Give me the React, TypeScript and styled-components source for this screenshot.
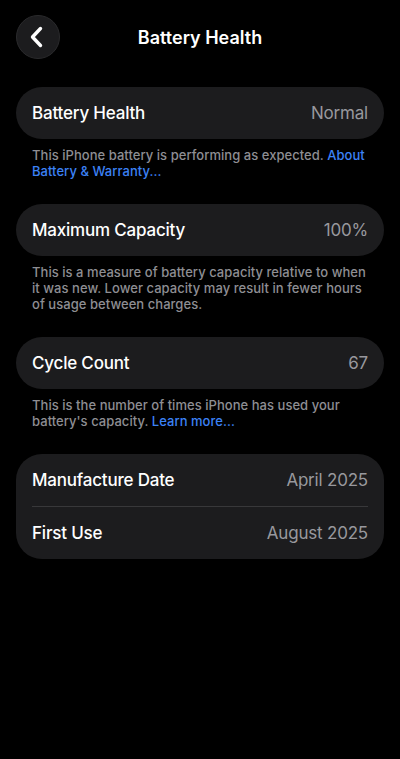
import styled, { createGlobalStyle } from "styled-components";

const GlobalStyle = createGlobalStyle`
  html, body {
    margin: 0;
    padding: 0;
    background: #000;
  }
  body {
    font-family: Inter, "Noto Sans", sans-serif;
    -webkit-font-smoothing: antialiased;
  }
`;

type Row = { label: string; value: string };

export default function App() {
  return (
    <Screen>
      <GlobalStyle />
      <Header>
        <BackButton aria-label="Back">
          <svg width="18" height="22" viewBox="0 0 18 22" fill="none">
            <path
              d="M12.5 2.5 L4.5 11 L12.5 19.5"
              stroke="#fff"
              strokeWidth="3.4"
              strokeLinecap="round"
              strokeLinejoin="round"
            />
          </svg>
        </BackButton>
        <Title>Battery Health</Title>
      </Header>
      <Content>
        {sections.map((s, i) => (
          <Section key={i}>
            <Card>
              {s.rows.map((r, j) => (
                <CardRow key={j} $divider={j > 0}>
                  <Label>{r.label}</Label>
                  <Value>{r.value}</Value>
                </CardRow>
              ))}
            </Card>
            {s.note && <Note>{s.note}</Note>}
          </Section>
        ))}
      </Content>
    </Screen>
  );
}

const Screen = styled.div`
  width: 400px;
  min-height: 759px;
  background: #000;
  color: #fff;
`;

const Header = styled.div`
  position: relative;
  height: 74px;
  display: flex;
  align-items: center;
  justify-content: center;
`;

const BackButton = styled.button`
  position: absolute;
  left: 16px;
  top: 15px;
  width: 44px;
  height: 44px;
  border-radius: 50%;
  background: #1c1c1e;
  border: 1px solid #2a2a2c;
  display: flex;
  align-items: center;
  justify-content: center;
  padding: 0 3px 0 0;
  box-sizing: border-box;
`;

const Title = styled.h1`
  margin: 0;
  font-size: 18px;
  font-weight: 600;
  color: #fff;
`;

const Content = styled.div`
  display: flex;
  flex-direction: column;
  gap: 25px;
  padding: 13px 16px 0;
`;

const Section = styled.div`
  display: flex;
  flex-direction: column;
`;

const Card = styled.div`
  background: #1c1c1e;
  border-radius: 26px;
  padding: 0 16px;
`;

const CardRow = styled.div<{ $divider: boolean }>`
  height: 52px;
  display: flex;
  align-items: center;
  justify-content: space-between;
  border-top: ${(p) => (p.$divider ? "1px solid #38383a" : "none")};
`;

const Label = styled.span`
  font-size: 17px;
  font-weight: 500;
  letter-spacing: -0.2px;
  color: #fff;
`;

const Value = styled.span`
  font-size: 17px;
  font-weight: 400;
  letter-spacing: -0.2px;
  color: #98989d;
`;

const Note = styled.p`
  margin: 8px 12px 0 16px;
  font-size: 13px;
  line-height: 16px;
  font-weight: 500;
  letter-spacing: 0.04px;
  color: #8e8e93;
`;

const NoteLink = styled.span`
  color: #3c82f6;
`;

const sections: { rows: Row[]; note?: React.ReactNode }[] = [
  {
    rows: [{ label: "Battery Health", value: "Normal" }],
    note: (
      <>
        This iPhone battery is performing as expected.{" "}
        <NoteLink>About Battery &amp; Warranty...</NoteLink>
      </>
    ),
  },
  {
    rows: [{ label: "Maximum Capacity", value: "100%" }],
    note: (
      <>
        This is a measure of battery capacity relative to when it was new.
        Lower capacity may result in fewer hours of usage between charges.
      </>
    ),
  },
  {
    rows: [{ label: "Cycle Count", value: "67" }],
    note: (
      <>
        This is the number of times iPhone has used your battery's capacity.{" "}
        <NoteLink>Learn more...</NoteLink>
      </>
    ),
  },
  {
    rows: [
      { label: "Manufacture Date", value: "April 2025" },
      { label: "First Use", value: "August 2025" },
    ],
  },
];
